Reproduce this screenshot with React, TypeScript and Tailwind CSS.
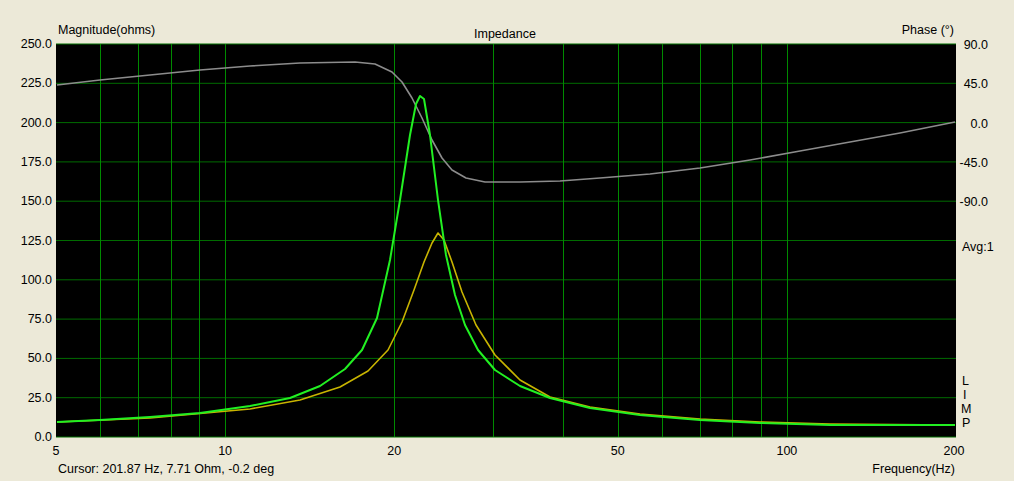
import React from "react";

const L = 56, T = 44, W = 900, H = 393;
const fx = (f: number) => L + (W * Math.log10(f / 5)) / Math.log10(40);
const yMag = (m: number) => T + H - (m / 250) * H;

const gray: [number, number][] = [[57,85],[100,80],[150,75],[200,70],[250,66],[300,63],[355,62],[375,64],[392,72],[402,82],[412,98],[422,118],[432,140],[442,158],[452,170],[466,178],[485,182],[520,182],[560,181],[600,178],[650,174],[700,168],[750,160],[800,151],[850,142],[900,133],[955,122]];
const green: [number, number][] = [[57,422],[100,420],[150,417],[200,413],[250,406],[290,398],[320,386],[345,369],[362,350],[377,318],[390,260],[400,200],[410,135],[416,104],[420,96],[424,99],[430,135],[438,200],[446,255],[455,295],[465,325],[478,350],[495,370],[520,386],[550,398],[590,408],[640,415],[700,420],[760,423],[830,425],[955,425]];
const yellow: [number, number][] = [[57,422],[150,418],[250,409],[300,400],[340,387],[368,371],[388,350],[402,322],[414,290],[424,262],[432,243],[438,233],[444,240],[452,262],[462,292],[476,325],[495,355],[520,380],[550,397],[590,407],[640,414],[700,419],[760,422],[830,424],[955,425]];
const pts = (a: [number, number][]) => a.map(p => p.join(",")).join(" ");

const vgrid = [6,7,8,9,10,20,30,40,50,60,70,80,90,100];
const xlabels: [number,string][] = [[5,"5"],[10,"10"],[20,"20"],[50,"50"],[100,"100"],[200,"200"]];

export default function App() {
  return (
    <div className="w-[1014px] h-[481px] bg-[#ECE9D8] text-black text-[12.5px] flex flex-col" style={{ fontFamily: '"Liberation Sans", Arial, sans-serif' }}>
      <div className="h-[36px] flex items-end pb-[-2px] pl-[58px] pr-[60px] leading-none relative">
        <span className="flex-1">Magnitude(ohms)</span>
        <span className="absolute left-[474px] bottom-[-4px]">Impedance</span>
        <span>Phase (°)</span>
      </div>
      <svg width="1014" height="426" viewBox="0 36 1014 426" className="block">
        <rect x={L} y={T} width={W} height={H} fill="#000" />
        {Array.from({ length: 11 }, (_, i) => (
          <line key={"h" + i} x1={L} x2={L + W} y1={T + i * H / 10} y2={T + i * H / 10} stroke="#006c00" strokeWidth="1" />
        ))}
        {vgrid.map(f => (
          <line key={"v" + f} x1={Math.round(fx(f)) + 0.5} x2={Math.round(fx(f)) + 0.5} y1={T} y2={T + H} stroke="#008a00" strokeWidth="1" />
        ))}
        <polyline points={pts(gray)} fill="none" stroke="#8c8c8c" strokeWidth="1.6" strokeLinejoin="round" />
        <polyline points={pts(yellow)} fill="none" stroke="#c8b400" strokeWidth="1.6" strokeLinejoin="round" />
        <polyline points={pts(green)} fill="none" stroke="#22f022" strokeWidth="2" strokeLinejoin="round" />
        <g fontSize="12.5" fill="#000" fontFamily='"Liberation Sans", Arial, sans-serif'>
          {Array.from({ length: 11 }, (_, i) => (
            <text key={"yl" + i} x={52} y={yMag(250 - i * 25) + 4} textAnchor="end">{(250 - i * 25).toFixed(1)}</text>
          ))}
          {["90.0","45.0","0.0","-45.0","-90.0"].map((t, i) => (
            <text key={"pl" + i} x={988} y={T + i * H / 10 + 5} textAnchor="end">{t}</text>
          ))}
          <text x={962} y={251}>Avg:1</text>
          <text x={962} y={385}>L</text>
          <text x={963} y={399}>I</text>
          <text x={961} y={413}>M</text>
          <text x={962} y={427}>P</text>
          {xlabels.map(([f, t]) => (
            <text key={"xl" + f} x={f === 200 ? fx(f) - 2 : fx(f)} y={455} textAnchor="middle">{t}</text>
          ))}
        </g>
      </svg>
      <div className="flex justify-between pl-[58px] pr-[59px] leading-none mt-[1px]">
        <span>Cursor: 201.87 Hz, 7.71 Ohm, -0.2 deg</span>
        <span>Frequency(Hz)</span>
      </div>
    </div>
  );
}
